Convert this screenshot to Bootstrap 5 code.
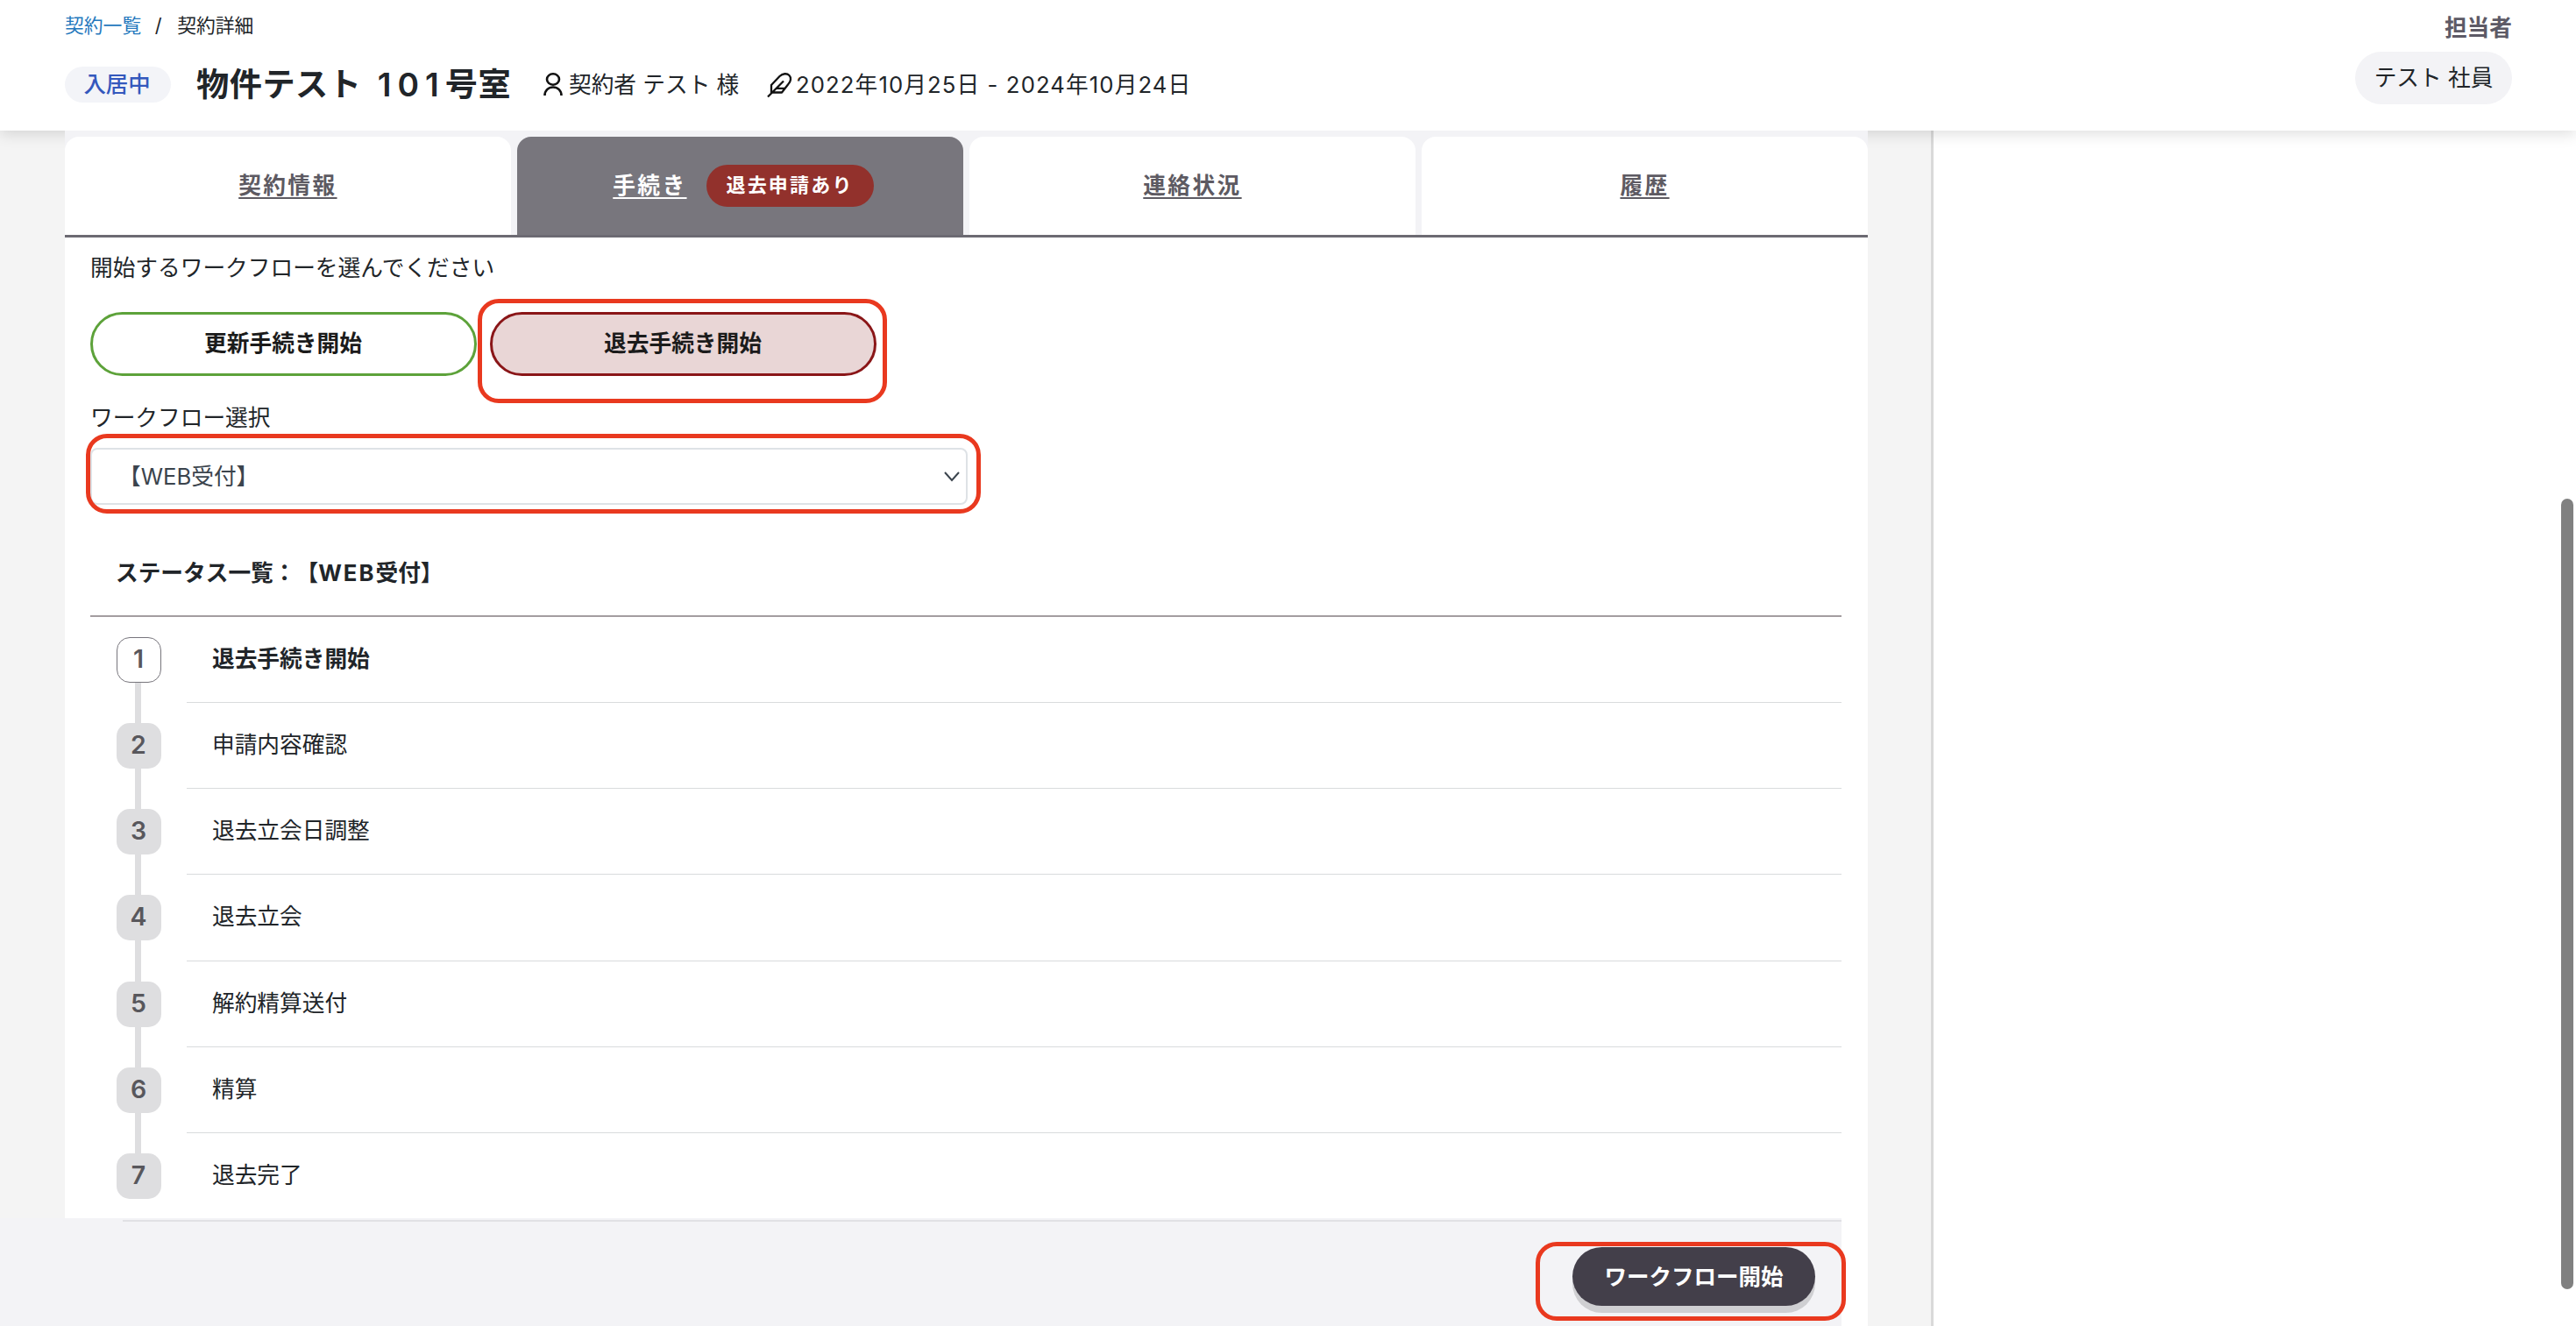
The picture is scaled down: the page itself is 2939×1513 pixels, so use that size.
<!DOCTYPE html>
<html lang="ja">
<head>
<meta charset="utf-8">
<title>契約詳細</title>
<link href="https://cdn.jsdelivr.net/npm/bootstrap@5.3.0/dist/css/bootstrap.min.css" rel="stylesheet">
<style>
body{width:2939px;height:1513px;overflow:hidden;background:#f4f4f4;color:#212529;font-family:Inter,"Noto Sans CJK JP",sans-serif;font-size:25.7px;line-height:38px;text-spacing-trim:space-all}
.page-head{height:149px;box-shadow:0 4px 16px rgba(0,0,0,.13);padding:0 73px 0 74px}
.crumbs{font-size:21.8px;line-height:30px;padding-top:14px}
.crumbs a{color:#2478bd}
.sep{width:41px;padding-right:2px}
.title-row{height:41px;margin-top:32px}
.state-pill{width:121px;height:41px;background:#f3f4f8;color:#3458bd;font-weight:500;line-height:40px;font-size:25.4px;padding-right:2px}
.room{font-size:37.2px;font-weight:700;letter-spacing:.5px;margin:0 0 0 29px;width:396px;line-height:43px;white-space:nowrap}
.room span{letter-spacing:7px;font-weight:600;margin-left:9px}
.who{width:196px;margin-left:7px;white-space:nowrap}
.feather{margin-left:30px}
.dates{letter-spacing:1.1px;margin-left:3px}
.staff-label{font-weight:700;color:#5d5a66;line-height:30px;padding-top:17px}
.staff-pill{width:179px;height:60px;line-height:59px;background:#f3f3f6;margin-top:12px;font-size:25.7px}
.main-col{width:2057px;margin-left:74px;height:1364px;z-index:2}
.tabbar{height:122px;padding-top:7px;gap:7.3px;border-bottom:3px solid #6c6a72;background:#f3f3f6}
.tabbar .nav-link{flex:none;width:508.750px;height:112px;border:0;border-radius:16px 16px 0 0;background:#fff;color:#5d5a62;font-weight:700;letter-spacing:2.4px;padding:0;gap:22px}
.tabbar .nav-link.active{background:#78767d;color:#fff;padding-left:7px}
.tab-text{text-decoration:underline;text-decoration-thickness:2px;text-underline-offset:4px}
.notice{width:191px;height:48px;background:#92312c;color:#fff;font-size:22px;letter-spacing:2.2px;line-height:47px;text-align:center;font-weight:700}
.pane{height:1119px;padding:0 30px 0 29px}
.lead-text{padding:16px 0 0;height:85px}
.flow-btn{width:441px;height:73px;border:3px solid #5da23a;border-radius:37px;font-size:25.7px;font-weight:700;color:#1b1b1b;background:#fff;padding:0 1px 0 0}
.flow-btn.leave{background:#e9d6d6;border-color:#8a1618}
.hl{position:absolute;border:5px solid #e9391f;border-radius:24px;pointer-events:none;z-index:5}
.hl-a{left:-14px;top:-15px;width:467px;height:119px}
.hl-b{left:-5px;top:-16px;width:1021px;height:91px}
.hl-c{left:-42px;top:-6px;width:354px;height:90px}
.flow-label{margin-top:29px;height:53px}
.flow-select{width:1001px;height:65px}
.flow-select .form-select{height:65px;border:2px solid #dee2e6;border-radius:8px;font-size:25.7px;padding:0 0 0 30px;color:#3b444d;line-height:60px;background-image:none}
.chev{position:absolute;right:9px;top:27px}
.status-title{font-weight:700;height:127.500px;padding:59px 0 0 29px;border-bottom:2px solid #a39da0}
.latin{letter-spacing:2px}
.step{height:98.3px}
.step-mark{width:110px;padding-left:30px}
.num{width:51px;height:52px;border-radius:15px;background:#dedee0;color:#58575c;font-weight:600;font-size:28.5px;margin-top:23px;padding:0 1px 2px 0}
.num.now{background:#fff;border:1px solid #77757c}
.bar{width:7px;height:46.300px;background:#dedee0;margin-left:21px}
.step-text{border-bottom:1px solid #d9dbdd;padding:29px 0 0 29px}
.step:last-child .step-text{border:0}
.foot{width:2101px;height:123px;left:0;top:1390px;z-index:3;background:#f3f3f6}
.foot-line{height:2px;margin-left:140px;background:#e1e1e5;margin-top:2px}
.start{width:277px;height:67px;border-radius:34px;background:#433f4a;color:#fff;font-weight:700;font-size:25.5px;box-shadow:0 8px 0 #cfcfd2;border:0;padding:0;line-height:64px}
.start-wrap{margin:29px 30px 0 auto;width:277px}
.side{width:736px;background:#fff;border-left:3px solid #d9d9d9}
.thumb{width:14px;height:902px;right:3px;top:569px;border-radius:7px;background:#808080;z-index:6}
</style>
<script src="https://cdn.jsdelivr.net/npm/bootstrap@5.3.0/dist/js/bootstrap.bundle.min.js"></script>
</head>
<body class="position-relative">
<header class="page-head bg-white d-flex justify-content-between position-relative z-1">
  <div>
    <nav class="crumbs d-flex"><a href="#" class="text-decoration-none">契約一覧</a><span class="sep text-center">/</span><span>契約詳細</span></nav>
    <div class="title-row d-flex align-items-center">
      <span class="state-pill rounded-pill text-center">入居中</span>
      <h1 class="room">物件テスト <span>101</span>号室</h1>
      <svg width="22" height="27" viewBox="0 0 22 27" fill="none" stroke="#111" stroke-width="2.6"><ellipse cx="11" cy="7.500" rx="7" ry="6.200"/><path d="M1.500 26c0-5.500 4-9.500 9.500-9.500s9.500 4 9.500 9.500"/></svg>
      <span class="who">契約者 テスト 様</span>
      <svg class="feather" width="30" height="30" viewBox="0 0 30 30" fill="none" stroke="#111" stroke-width="2.300" stroke-linejoin="round"><path d="M1 28.500 19 10.500M5 24.500V15L14.500 5C18 1.500 23 1.500 25.500 4S27.500 11 24 14.500L17 23.500H6M10.500 18.800h10"/></svg>
      <span class="dates text-nowrap">2022年10月25日 - 2024年10月24日</span>
    </div>
  </div>
  <div class="text-end">
    <div class="staff-label">担当者</div>
    <div class="staff-pill rounded-pill text-center">テスト 社員</div>
  </div>
</header>
<div class="d-flex justify-content-between">
  <main class="main-col position-relative bg-white">
    <nav class="tabbar nav d-flex flex-nowrap">
      <a class="nav-link d-flex align-items-center justify-content-center" href="#"><span class="tab-text">契約情報</span></a>
      <a class="nav-link active d-flex align-items-center justify-content-center" href="#"><span class="tab-text">手続き</span><span class="notice rounded-pill">退去申請あり</span></a>
      <a class="nav-link d-flex align-items-center justify-content-center" href="#"><span class="tab-text">連絡状況</span></a>
      <a class="nav-link d-flex align-items-center justify-content-center" href="#"><span class="tab-text">履歴</span></a>
    </nav>
    <section class="pane">
      <div class="lead-text">開始するワークフローを選んでください</div>
      <div class="d-flex" style="gap:15px">
        <button class="btn flow-btn">更新手続き開始</button>
        <div class="position-relative"><button class="btn flow-btn leave">退去手続き開始</button><span class="hl hl-a"></span></div>
      </div>
      <div class="flow-label">ワークフロー選択</div>
      <div class="flow-select position-relative">
        <select class="form-select"><option>【WEB受付】</option></select>
        <svg class="chev" width="18" height="12" viewBox="0 0 18 12" fill="none" stroke="#3b444d" stroke-width="2"><path d="M1 1l8 9 8-9"/></svg>
        <span class="hl hl-b"></span>
      </div>
      <div class="status-title">ステータス一覧：【<span class="latin">WEB</span>受付】</div>
      <div class="steps">
        <div class="step d-flex"><div class="step-mark"><div class="num now d-flex align-items-center justify-content-center">1</div><div class="bar"></div></div><div class="step-text flex-fill fw-bold">退去手続き開始</div></div>
        <div class="step d-flex"><div class="step-mark"><div class="num d-flex align-items-center justify-content-center">2</div><div class="bar"></div></div><div class="step-text flex-fill">申請内容確認</div></div>
        <div class="step d-flex"><div class="step-mark"><div class="num d-flex align-items-center justify-content-center">3</div><div class="bar"></div></div><div class="step-text flex-fill">退去立会日調整</div></div>
        <div class="step d-flex"><div class="step-mark"><div class="num d-flex align-items-center justify-content-center">4</div><div class="bar"></div></div><div class="step-text flex-fill">退去立会</div></div>
        <div class="step d-flex"><div class="step-mark"><div class="num d-flex align-items-center justify-content-center">5</div><div class="bar"></div></div><div class="step-text flex-fill">解約精算送付</div></div>
        <div class="step d-flex"><div class="step-mark"><div class="num d-flex align-items-center justify-content-center">6</div><div class="bar"></div></div><div class="step-text flex-fill">精算</div></div>
        <div class="step d-flex"><div class="step-mark"><div class="num d-flex align-items-center justify-content-center">7</div></div><div class="step-text flex-fill">退去完了</div></div>
      </div>
    </section>
  </main>
  <aside class="side"></aside>
</div>
<footer class="foot position-absolute">
  <div class="foot-line"></div>
  <div class="start-wrap position-relative"><button class="btn start w-100">ワークフロー開始</button><span class="hl hl-c"></span></div>
</footer>
<div class="thumb position-absolute"></div>
</body>
</html>
